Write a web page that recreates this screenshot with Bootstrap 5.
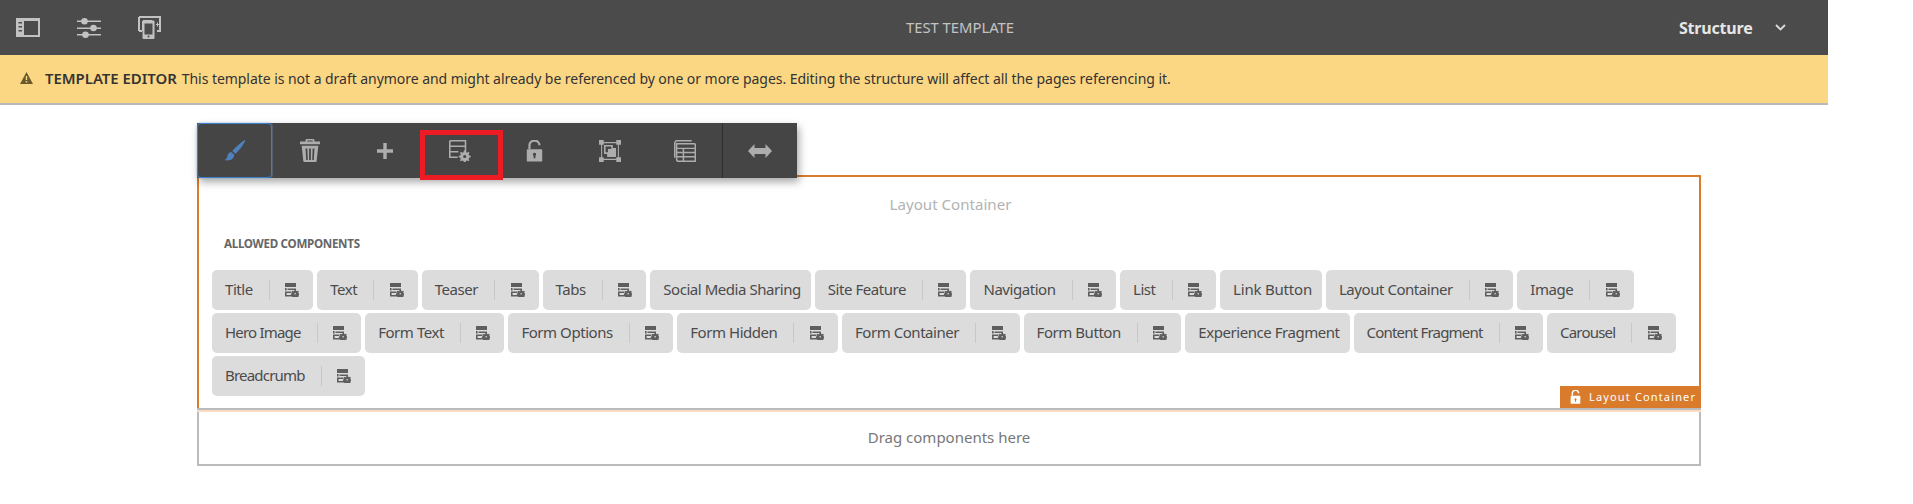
<!DOCTYPE html>
<html lang="en"><head><meta charset="utf-8"><title>Template Editor</title>
<link href="https://cdn.jsdelivr.net/npm/bootstrap@5.3.0/dist/css/bootstrap.min.css" rel="stylesheet">
<style>
html,body{background:#fff;font-family:"Noto Sans","Open Sans",sans-serif;overflow:hidden}
.shell{width:1828px}
.topbar{height:55px;background:#4b4b4b;color:#ccc}
.top-left{width:342px;padding-left:16px;gap:37px}
.top-right{width:250px;padding-left:101px;gap:22px}
.top-title{font-size:14.8px;color:#c4c4c4}
.struct{font-size:16px;font-weight:700;color:#e6e6e6;letter-spacing:-.2px}
.banner{height:50px;background:#fbd783;border-bottom:2px solid #b8b8b8;padding-left:20px;font-size:14px;color:#333;padding-bottom:2px}
.banner span{letter-spacing:-.045px}
.banner b{margin-left:12px;margin-right:5px;font-weight:600;font-size:14.9px}
.stage{margin-left:197px;width:1504px;padding-top:18px}
.tools{width:600px;height:55px;background:#454545;position:relative;z-index:2;box-shadow:2px 4px 8px rgba(0,0,0,.35)}
.tool{width:75px;height:55px;color:#adadad}
.tool-on{border:1px solid #3f7fc9;border-radius:4px;box-shadow:0 0 2px #7aa7dc;color:#4f82bd}
.tool-sep{border-left:1px solid #2e2e2e}
.redbox{position:absolute;left:223px;top:7px;width:83px;height:50px;border:5px solid #ed1c24;z-index:3}
.frame{position:relative;margin-top:-3px;height:233px;border:2px solid #d97b2a;border-bottom:0;padding:0 10px 0 13px}
.frame-end{height:4px;margin:0;background:linear-gradient(#bbb 0 2px,#f8dcc5 2px 4px)}
.frame-title{padding-top:15px;height:46px;line-height:24px;font-size:15.1px;color:#b3b3b3;text-align:center}
.allowed{margin:11px 0 0 12px;height:36px;font-size:11.6px;font-weight:700;color:#666;letter-spacing:-.3px;line-height:20px}
.chips{gap:3px 4px}
.chip{height:40px;background:#dcdcdc;border-radius:5px;padding:0 10px 2px 13px;font-size:15px;color:#4b4b4b;letter-spacing:-.45px;white-space:nowrap}
.chip.tx-tight{letter-spacing:-.8px}
.chip.tx-loose{letter-spacing:-.2px}
.chip i{display:block;width:1px;height:20px;margin:2px 15.500px 0 16px;background:#c8c8c8}
.chip svg{margin:2px 4px 0 0;color:#5e5e5e}
.tag{position:absolute;right:-2px;bottom:0;width:141px;height:22px;background:#d97b2a;color:#fff;font-size:11px;letter-spacing:1.15px;padding-left:10px;gap:8px}
.drop{height:54px;border:2px solid #bbb;border-top:0;font-size:15px;color:#777;padding-bottom:2px}
</style></head><body>
<svg width="0" height="0" class="d-block" style="position:absolute">
<symbol id="cfg" viewBox="0 0 28 28"><path d="M1 1h20v15h-1.500M1 1v21h10M1 8h20M1 15h11" fill="none" stroke="currentColor" stroke-width="2"/><path d="M19 13.500h2l.5 2 1.500.6 1.800-1 1.200 1.200-1 1.800.6 1.500 2 .5v2l-2 .5-.6 1.500 1 1.800-1.200 1.200-1.800-1-1.500.6-.5 2h-2l-.5-2-1.500-.6-1.800 1-1.200-1.200 1-1.800-.6-1.500-2-.5v-2l2-.5.6-1.500-1-1.800 1.200-1.200 1.800 1 1.500-.6zM20 19a2 2 0 1 0 0 4 2 2 0 0 0 0-4z" fill="currentColor" fill-rule="evenodd"/></symbol>
<symbol id="cfgs" viewBox="0 0 14 14"><path d="M0 0h11v4H0zM0 5h1.600v2.500H0zM0 8.500h6.500v1.500H0zM1.600 12h5.400v1.500H0V9h1.600zM2.500 5.500h8.500v1.500H2.500z" fill="currentColor"/><path d="M9.500 7h1.500l.3 1 .8.300.9-.5.800.8-.5.9.3.8 1 .3v1.500l-1 .3-.3.800.5.900-.8.800-.9-.5-.8.300-.3 1H9.500l-.3-1-.8-.3-.9.5-.8-.8.5-.9-.3-.8-1-.3v-1.500l1-.3.3-.8-.5-.9.8-.8.9.5.8-.3zM10.200 10a.8.800 0 1 0 0 1.600.8.800 0 0 0 0-1.600z" fill="currentColor" fill-rule="evenodd"/></symbol>
<symbol id="lock" viewBox="0 0 18 24"><path d="M3.500 10V6.500a5.500 5.500 0 0 1 11-.8" fill="none" stroke="currentColor" stroke-width="2.400"/><path d="M1.500 10h15a1 1 0 0 1 1 1v11.500a1 1 0 0 1-1 1h-15a1 1 0 0 1-1-1V11a1 1 0 0 1 1-1zM9 14a1.800 1.800 0 0 0-1 3.300V20h2v-2.700A1.800 1.800 0 0 0 9 14z" fill="currentColor" fill-rule="evenodd"/></symbol>
</svg>
<div class="shell">
<header class="topbar d-flex align-items-center">
<div class="top-left d-flex align-items-center">
<svg width="24" height="19" viewBox="0 0 24 19"><path d="M0 0h24v19H0zM8 3v14h14V3zM2.500 4v1.500H6V4zm0 4v1.500H6V8zm0 4v1.500H6V12z" fill="#c2c2c2" fill-rule="evenodd"/></svg>
<svg width="24" height="20" viewBox="0 0 24 20" fill="#c2c2c2"><path d="M0 2.500h24v1.500H0zM0 9.500h24V11H0zM0 16h24v1.500H0z"/><circle cx="7.500" cy="3.300" r="3.300"/><circle cx="16.500" cy="10" r="3.300"/><circle cx="8.500" cy="16.700" r="3.300"/></svg>
<svg width="23" height="23" viewBox="0 0 23 23"><path d="M1 1h21v14h-3M1 15V1M1 15h3" fill="none" stroke="#c2c2c2" stroke-width="2"/><path d="M5 4h9v1H5zM4 5h1v10H4z" fill="#c2c2c2"/><path d="M5.500 4.500h10a1 1 0 0 1 1 1V22a1 1 0 0 1-1 1h-10a1 1 0 0 1-1-1V5.500a1 1 0 0 1 1-1zM6.500 7.500V18.500h8V7.500zM10.500 19.500a1 1 0 1 0 0 2 1 1 0 0 0 0-2z" fill="#c2c2c2" fill-rule="evenodd"/><path d="M19.500 6.500v4M18 8.500h3" stroke="#c2c2c2"/></svg>
</div>
<div class="top-title flex-fill text-center">TEST TEMPLATE</div>
<div class="top-right d-flex align-items-center"><span class="struct">Structure</span>
<svg width="11" height="7" viewBox="0 0 11 7"><path d="M1 1l4.500 4.500L10 1" fill="none" stroke="#ddd" stroke-width="1.800"/></svg></div>
</header>
<div class="banner d-flex align-items-center">
<svg width="13" height="12" viewBox="0 0 13 12"><path d="M6.500 0L13 12H0zM5.800 4v4h1.400V4zm0 5v1.400h1.400V9z" fill="#6b5a2e" fill-rule="evenodd"/></svg>
<b>TEMPLATE EDITOR</b><span>This template is not a draft anymore and might already be referenced by one or more pages. Editing the structure will affect all the pages referencing it.</span>
</div>
<main class="stage">
<div class="tools d-flex">
<div class="tool tool-on d-flex align-items-center justify-content-center"><svg width="22" height="21" viewBox="0 0 22 22" fill="currentColor"><path d="M21 0c.6.3.8.8.5 1.300C19 6 15 11.500 11.500 14.500L8.200 11.500C11.500 7.500 16.500 3 21 0z"/><path d="M7 12.500l3.300 3c-.3 3.200-2.500 5.500-5.500 5.800-1.500.2-3.300.200-4.800-.3 2.200-1 2.800-2.500 3-4 .3-2.300 1.800-4 4-4.500z"/></svg></div>
<div class="tool d-flex align-items-center justify-content-center"><svg width="20" height="23" viewBox="0 0 18 22" preserveAspectRatio="none" fill="currentColor"><path d="M6 0h6a1 1 0 0 1 1 1v1.500h5V5H0V2.500h5V1a1 1 0 0 1 1-1zm.5 1.500v1h5v-1z" fill-rule="evenodd"/><path d="M1.500 6.500h15L15 21a1 1 0 0 1-1 1H4a1 1 0 0 1-1-1zM5 9l.6 11H7L6.600 9zm3.200 0v11h1.600V9zm4.800 0h-1.600L11 20h1.400z" fill-rule="evenodd"/></svg></div>
<div class="tool d-flex align-items-center justify-content-center"><svg width="16" height="16" viewBox="0 0 14 14"><path d="M5.500 0h3v5.500H14v3H8.500V14h-3V8.500H0v-3h5.500z" fill="currentColor"/></svg></div>
<div class="tool d-flex align-items-center justify-content-center"><svg width="22" height="22" viewBox="0 0 28 28"><use href="#cfg"/></svg></div>
<div class="tool d-flex align-items-center justify-content-center"><svg width="17" height="22" viewBox="0 0 18 24"><use href="#lock"/></svg></div>
<div class="tool d-flex align-items-center justify-content-center"><svg width="22" height="22" viewBox="0 0 21 21"><path d="M2.500 2.500h16v16h-16z" fill="none" stroke="currentColor"/><path d="M0 0h4.500v4.500H0zM16.500 0H21v4.500h-4.500zM0 16.500h4.500V21H0zM16.500 16.500H21V21h-4.500z" fill="currentColor"/><path d="M5.500 5.500h7v3h3v7h-7v-3h-3z" fill="none" stroke="currentColor" stroke-width="1.500"/><path d="M8.500 8.500h7v7h-7z" fill="currentColor"/></svg></div>
<div class="tool d-flex align-items-center justify-content-center"><svg width="22" height="22" viewBox="0 0 21 21" fill="none" stroke="currentColor" stroke-width="1.400"><path d="M.7 17V2.500L2 .7h15M2.500 19V3.500h17a1 1 0 0 1 .8 1V20.300H3.500zM2.500 8h18M2.500 12h18M2.500 16h18M9 8v12"/></svg></div>
<div class="tool tool-sep d-flex align-items-center justify-content-center"><svg width="24" height="14" viewBox="0 0 24 14"><path d="M0 7l6.500-7v4h11V0L24 7l-6.500 7v-4h-11v4z" fill="currentColor"/></svg></div>
<div class="redbox"></div>
</div>
<section class="frame">
<div class="frame-title">Layout Container</div>
<div class="allowed">ALLOWED COMPONENTS</div>
<div class="chips d-flex flex-wrap">
<div class="chip d-flex align-items-center">Title<i></i><svg width="14" height="14"><use href="#cfgs"/></svg></div>
<div class="chip d-flex align-items-center">Text<i></i><svg width="14" height="14"><use href="#cfgs"/></svg></div>
<div class="chip d-flex align-items-center">Teaser<i></i><svg width="14" height="14"><use href="#cfgs"/></svg></div>
<div class="chip d-flex align-items-center">Tabs<i></i><svg width="14" height="14"><use href="#cfgs"/></svg></div>
<div class="chip d-flex align-items-center">Social Media Sharing</div>
<div class="chip d-flex align-items-center">Site Feature<i></i><svg width="14" height="14"><use href="#cfgs"/></svg></div>
<div class="chip d-flex align-items-center">Navigation<i></i><svg width="14" height="14"><use href="#cfgs"/></svg></div>
<div class="chip d-flex align-items-center">List<i></i><svg width="14" height="14"><use href="#cfgs"/></svg></div>
<div class="chip tx-loose d-flex align-items-center">Link Button</div>
<div class="chip d-flex align-items-center">Layout Container<i></i><svg width="14" height="14"><use href="#cfgs"/></svg></div>
<div class="chip d-flex align-items-center">Image<i></i><svg width="14" height="14"><use href="#cfgs"/></svg></div>
<div class="chip tx-tight d-flex align-items-center">Hero Image<i></i><svg width="14" height="14"><use href="#cfgs"/></svg></div>
<div class="chip d-flex align-items-center">Form Text<i></i><svg width="14" height="14"><use href="#cfgs"/></svg></div>
<div class="chip d-flex align-items-center">Form Options<i></i><svg width="14" height="14"><use href="#cfgs"/></svg></div>
<div class="chip d-flex align-items-center">Form Hidden<i></i><svg width="14" height="14"><use href="#cfgs"/></svg></div>
<div class="chip d-flex align-items-center">Form Container<i></i><svg width="14" height="14"><use href="#cfgs"/></svg></div>
<div class="chip d-flex align-items-center">Form Button<i></i><svg width="14" height="14"><use href="#cfgs"/></svg></div>
<div class="chip d-flex align-items-center">Experience Fragment</div>
<div class="chip tx-tight d-flex align-items-center">Content Fragment<i></i><svg width="14" height="14"><use href="#cfgs"/></svg></div>
<div class="chip tx-tight d-flex align-items-center">Carousel<i></i><svg width="14" height="14"><use href="#cfgs"/></svg></div>
<div class="chip tx-tight d-flex align-items-center">Breadcrumb<i></i><svg width="14" height="14"><use href="#cfgs"/></svg></div>
</div>
<div class="tag d-flex align-items-center"><svg width="11" height="14" viewBox="0 0 18 24"><use href="#lock"/></svg><span>Layout Container</span></div>
</section>
<div class="frame-end"></div>
<div class="drop d-flex align-items-center justify-content-center">Drag components here</div>
</main>
</div>
<script src="https://cdn.jsdelivr.net/npm/bootstrap@5.3.0/dist/js/bootstrap.bundle.min.js"></script>
</body></html>
